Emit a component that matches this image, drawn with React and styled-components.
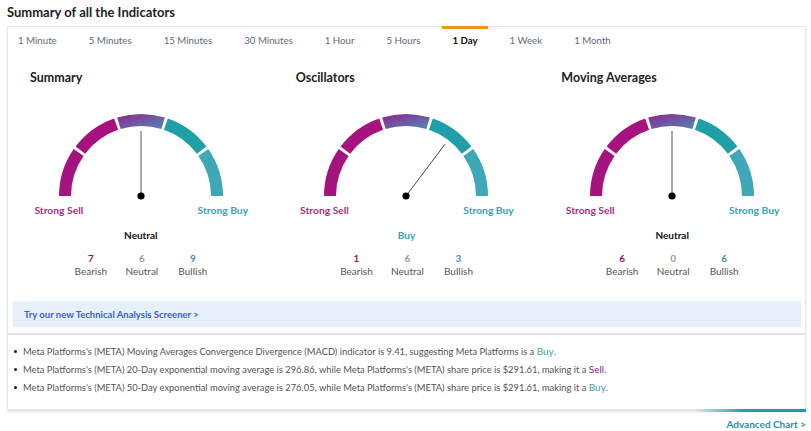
import React from "react";
import styled, { createGlobalStyle } from "styled-components";

const GlobalStyle = createGlobalStyle`
  body {
    margin: 0;
    background: #fff;
    font-family: Lato, "Open Sans", Arial, sans-serif;
  }
`;

const Page = styled.div`
  width: 811px;
  padding: 4px 5px 0 7px;
  box-sizing: border-box;
`;

const Title = styled.h2`
  margin: 0 0 6px;
  font-size: 13px;
  line-height: 16px;
  font-weight: 700;
  color: #1e1e1e;
`;

const Card = styled.div`
  position: relative;
  border: 1px solid #e9e9e9;
  box-shadow: 0 2px 2px rgba(0, 0, 0, 0.12);
  background: #fff;
  &::after {
    content: "";
    position: absolute;
    right: -1px;
    bottom: -3px;
    width: 112px;
    height: 3px;
    background: linear-gradient(to right, rgba(30, 158, 166, 0), #1e9ea6 45%);
  }
`;

const Tabs = styled.div`
  display: flex;
  gap: 12px;
  height: 28px;
`;

const Tab = styled.div`
  padding: 0 10px 4px;
  border-top: 3px solid ${(p) => (p.active ? "#f7931e" : "transparent")};
  margin-top: -1px;
  display: flex;
  align-items: center;
  font-size: 9.7px;
  font-weight: ${(p) => (p.active ? 700 : 400)};
  color: ${(p) => (p.active ? "#111" : "#5d6b7a")};
`;

const Columns = styled.div`
  display: grid;
  grid-template-columns: repeat(3, 1fr);
`;

const Column = styled.div`
  display: flex;
  flex-direction: column;
  align-items: center;
  padding-top: 15px;
`;

const Heading = styled.h3`
  align-self: flex-start;
  margin: 0 0 26px 22px;
  font-size: 12.5px;
  line-height: 16px;
  font-weight: 700;
  color: #222;
`;

const EndLabels = styled.div`
  width: 164px;
  display: flex;
  justify-content: space-between;
  margin-top: 1px;
`;

const EndLabel = styled.div`
  width: 0;
  display: flex;
  justify-content: center;
  white-space: nowrap;
  font-size: 10.3px;
  font-weight: 700;
  line-height: 14px;
  color: ${(p) => p.color};
`;

const Signal = styled.div`
  margin-top: 12px;
  font-size: 10px;
  font-weight: 700;
  line-height: 13px;
  color: ${(p) => p.color};
`;

const Counts = styled.div`
  display: grid;
  grid-template-columns: repeat(3, 51px);
  margin: 10px 0 0 2px;
`;

const Count = styled.div`
  display: flex;
  flex-direction: column;
  align-items: center;
  font-size: 10px;
  line-height: 13px;
  color: #555;
`;

const CountValue = styled.span`
  font-weight: 700;
  color: ${(p) => p.color};
`;

const Banner = styled.div`
  margin: 23px 4px 0 5px;
  height: 26px;
  background: #e6f0fc;
  display: flex;
  align-items: center;
  padding-left: 11px;
  font-size: 9.5px;
  font-weight: 700;
  color: #3a60da;
`;

const Divider = styled.div`
  margin-top: 6px;
  border-top: 2px solid #e3e3e3;
`;

const Notes = styled.ul`
  margin: 0;
  padding: 8px 0 12px 6px;
  list-style: none;
`;

const Note = styled.li`
  position: relative;
  padding-left: 9px;
  font-size: 9.35px;
  line-height: 18px;
  height: 18px;
  color: #555;
  &::before {
    content: "";
    position: absolute;
    left: 0;
    top: 7px;
    width: 3px;
    height: 3px;
    border-radius: 50%;
    background: #222;
  }
`;

const Verdict = styled.span`
  font-size: 10px;
  line-height: 1;
  color: ${(p) => (p.sell ? "#a0157f" : "#3a9fb8")};
`;

const Footer = styled.div`
  display: flex;
  justify-content: flex-end;
  padding-top: 8px;
`;

const ChartLink = styled.a`
  font-size: 10px;
  font-weight: 700;
  color: #2a8fa0;
  text-decoration: none;
`;

const MAGENTA = "#a5137f";
const TEAL_TEXT = "#3aa2b5";

const polar = (cx, cy, r, deg) => {
  const a = (deg * Math.PI) / 180;
  return [cx + r * Math.cos(a), cy - r * Math.sin(a)];
};

const segPath = (cx, cy, r1, r2, from, to) => {
  const [x1, y1] = polar(cx, cy, r2, from);
  const [x2, y2] = polar(cx, cy, r2, to);
  const [x3, y3] = polar(cx, cy, r1, to);
  const [x4, y4] = polar(cx, cy, r1, from);
  return `M${x1} ${y1} A${r2} ${r2} 0 0 1 ${x2} ${y2} L${x3} ${y3} A${r1} ${r1} 0 0 0 ${x4} ${y4} Z`;
};

const Gauge = ({ id, angle }) => {
  const cx = 90;
  const cy = 84;
  const gap = 1.1;
  const fills = [MAGENTA, "#a7127f", `url(#mid-${id})`, "#1f9fa7", "#3ea8b9"];
  const [nx, ny] = polar(cx, cy, 65, angle);
  return (
    <svg width="180" height="90" viewBox="0 0 180 90">
      <defs>
        <linearGradient id={`mid-${id}`} x1="0" y1="0" x2="1" y2="1">
          <stop offset="0" stopColor="#8e2590" />
          <stop offset="1" stopColor="#4f88b4" />
        </linearGradient>
      </defs>
      {fills.map((f, i) => {
        const from = 180 - i * 36;
        const to = from - 36;
        return (
          <path
            key={i}
            d={segPath(cx, cy, 70, 82, i === 0 ? 180 : from - gap, i === 4 ? 0 : to + gap)}
            fill={f}
          />
        );
      })}
      <line
        x1={cx}
        y1={cy}
        x2={nx}
        y2={ny}
        stroke={angle === 90 ? "#a9a9a9" : "#444"}
        strokeWidth={angle === 90 ? 2 : 1}
      />
      <circle cx={cx} cy={cy} r="3.6" fill="#000" />
    </svg>
  );
};

const tabs = ["1 Minute", "5 Minutes", "15 Minutes", "30 Minutes", "1 Hour", "5 Hours", "1 Day", "1 Week", "1 Month"];

const gauges = [
  { id: "sum", title: "Summary", angle: 90, signal: "Neutral", signalColor: "#111", counts: [7, 6, 9] },
  { id: "osc", title: "Oscillators", angle: 53, signal: "Buy", signalColor: TEAL_TEXT, counts: [1, 6, 3] },
  { id: "ma", title: "Moving Averages", angle: 90, signal: "Neutral", signalColor: "#111", counts: [6, 0, 6] },
];

const countColors = ["#a3126b", "#9a9a9a", "#3c91b0"];
const countLabels = ["Bearish", "Neutral", "Bullish"];

export default function App() {
  return (
    <Page>
      <GlobalStyle />
      <Title>Summary of all the Indicators</Title>
      <Card>
        <Tabs>
          {tabs.map((t) => (
            <Tab key={t} active={t === "1 Day"}>
              {t}
            </Tab>
          ))}
        </Tabs>
        <Columns>
          {gauges.map((g) => (
            <Column key={g.id}>
              <Heading>{g.title}</Heading>
              <Gauge id={g.id} angle={g.angle} />
              <EndLabels>
                <EndLabel color="#a5307f">Strong Sell</EndLabel>
                <EndLabel color={TEAL_TEXT}>Strong Buy</EndLabel>
              </EndLabels>
              <Signal color={g.signalColor}>{g.signal}</Signal>
              <Counts>
                {g.counts.map((c, i) => (
                  <Count key={i}>
                    <CountValue color={countColors[i]}>{c}</CountValue>
                    {countLabels[i]}
                  </Count>
                ))}
              </Counts>
            </Column>
          ))}
        </Columns>
        <Banner>Try our new Technical Analysis Screener &gt;</Banner>
        <Divider />
        <Notes>
          <Note>
            Meta Platforms's (META) Moving Averages Convergence Divergence (MACD) indicator is 9.41, suggesting Meta
            Platforms is a <Verdict>Buy</Verdict>.
          </Note>
          <Note>
            Meta Platforms's (META) 20-Day exponential moving average is 296.86, while Meta Platforms's (META) share
            price is $291.61, making it a <Verdict sell>Sell</Verdict>.
          </Note>
          <Note>
            Meta Platforms's (META) 50-Day exponential moving average is 276.05, while Meta Platforms's (META) share
            price is $291.61, making it a <Verdict>Buy</Verdict>.
          </Note>
        </Notes>
      </Card>
      <Footer>
        <ChartLink href="#">Advanced Chart &gt;</ChartLink>
      </Footer>
    </Page>
  );
}
